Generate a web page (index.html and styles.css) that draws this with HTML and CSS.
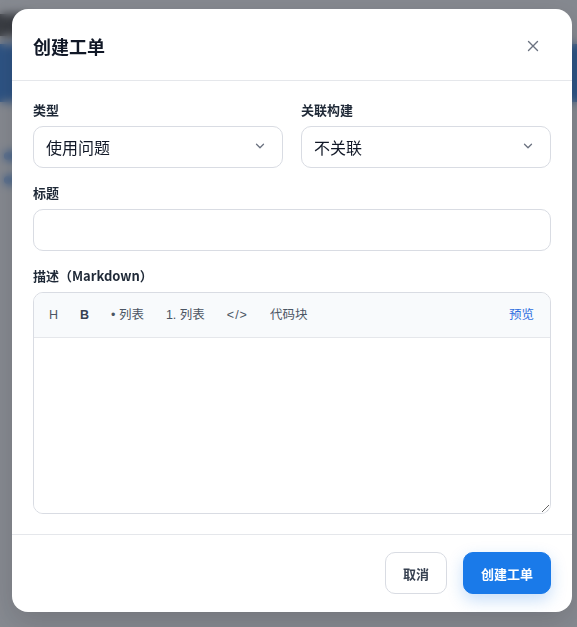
FILE: index.html
```html
<!DOCTYPE html>
<html lang="zh-CN">
<head>
<meta charset="utf-8">
<title>创建工单</title>
<link rel="stylesheet" href="styles.css">
</head>
<body>
<div class="page">
  <div class="page-top"><span class="page-logo"></span></div>
  <div class="page-band"></div>
  <div class="page-content">
    <div class="page-line"></div>
    <div class="page-line short"></div>
  </div>
</div>
<div class="overlay">
  <div class="modal">
    <div class="modal-header">
      <h2 class="modal-title">创建工单</h2>
      <button class="close-btn" aria-label="关闭">
        <svg width="12" height="12" viewBox="0 0 12 12"><path d="M1.5 1.5L10.5 10.5M10.5 1.5L1.5 10.5" stroke="#6b7280" stroke-width="1.4" stroke-linecap="round"/></svg>
      </button>
    </div>
    <div class="modal-body">
      <div class="row-2">
        <div class="field">
          <label class="label">类型</label>
          <div class="select"><span>使用问题</span>
            <svg width="10" height="6" viewBox="0 0 10 6"><path d="M1.5 1.2L5 4.7L8.5 1.2" fill="none" stroke="#6b7280" stroke-width="1.3" stroke-linecap="round" stroke-linejoin="round"/></svg>
          </div>
        </div>
        <div class="field">
          <label class="label">关联构建</label>
          <div class="select"><span>不关联</span>
            <svg width="10" height="6" viewBox="0 0 10 6"><path d="M1.5 1.2L5 4.7L8.5 1.2" fill="none" stroke="#6b7280" stroke-width="1.3" stroke-linecap="round" stroke-linejoin="round"/></svg>
          </div>
        </div>
      </div>
      <div class="field">
        <label class="label">标题</label>
        <input class="input" type="text">
      </div>
      <div class="field last">
        <label class="label">描述（Markdown）</label>
        <div class="editor">
          <div class="toolbar">
            <div class="tools">
              <button class="tool">H</button>
              <button class="tool bold">B</button>
              <button class="tool">• 列表</button>
              <button class="tool">1. 列表</button>
              <button class="tool code">&lt;/&gt;</button>
              <button class="tool">代码块</button>
            </div>
            <button class="tool preview">预览</button>
          </div>
          <textarea class="textarea"></textarea>
        </div>
      </div>
    </div>
    <div class="modal-footer">
      <button class="btn btn-cancel">取消</button>
      <button class="btn btn-primary">创建工单</button>
    </div>
  </div>
</div>
</body>
</html>
```
FILE: styles.css
```css
* { box-sizing: border-box; }
html, body { margin: 0; padding: 0; }
body {
  width: 577px;
  height: 627px;
  overflow: hidden;
  font-family: "Noto Sans CJK SC", "Noto Sans", sans-serif;
  background: #f3f4f6;
}
.page { width: 100%; height: 100%; display: flex; flex-direction: column; }
.page-top { height: 44px; background: #f1f2f4; padding: 14px 0 0 0; }
.page-logo { display: block; width: 40px; height: 22px; background: #333; border-radius: 4px; margin-left: -10px; }
.page-band { height: 58px; background: #1a6fd8; }
.page-content { flex: 1; padding: 50px 0 0 0; background: #f3f4f6; }
.page-line { height: 8px; width: 30px; background: #1a73e8; margin-bottom: 16px; margin-left: 4px; border-radius: 4px; }
.page-line.short { width: 14px; }

.overlay {
  position: fixed;
  inset: 0;
  background: rgba(62, 66, 76, 0.6);
  backdrop-filter: blur(5px);
  padding: 9px 0 0 12px;
}
.modal {
  width: 560px;
  background: #fff;
  border-radius: 16px;
  box-shadow: 0 10px 30px rgba(0,0,0,0.15);
  display: flex;
  flex-direction: column;
}
.modal-header {
  height: 72px;
  border-bottom: 1px solid #e5e7eb;
  display: flex;
  align-items: center;
  justify-content: space-between;
  padding: 2px 21px 0 21px;
}
.modal-title {
  margin: 0;
  font-size: 18px;
  font-weight: 700;
  color: #111827;
  line-height: 24px;
}
.close-btn {
  width: 32px;
  height: 32px;
  border: 0;
  background: transparent;
  display: flex;
  align-items: center;
  justify-content: center;
  margin-right: 2px;
  padding: 0;
}
.modal-body {
  padding: 19px 21px 20px 21px;
  border-bottom: 1px solid #e5e7eb;
  display: flex;
  flex-direction: column;
  gap: 15px;
}
.row-2 { display: grid; grid-template-columns: 1fr 1fr; gap: 18px; }
.field { display: flex; flex-direction: column; }
.label {
  font-size: 13px;
  font-weight: 700;
  color: #1f2937;
  line-height: 20px;
  margin-bottom: 6px;
}
.select {
  height: 42px;
  border: 1px solid #d9dce3;
  border-radius: 10px;
  display: flex;
  align-items: center;
  justify-content: space-between;
  padding: 0 17px 0 12px;
  font-size: 16px;
  color: #111827;
}
.select svg { margin-top: -3px; }
.input {
  height: 42px;
  border: 1px solid #d9dce3;
  border-radius: 10px;
  padding: 0 12px;
  font: inherit;
  outline: none;
}
.editor {
  border: 1px solid #d9dce3;
  border-radius: 10px;
  overflow: hidden;
  display: flex;
  flex-direction: column;
}
.toolbar {
  height: 45px;
  background: #f8fafc;
  border-bottom: 1px solid #e5e7eb;
  display: flex;
  align-items: center;
  justify-content: space-between;
  padding: 0 8px 0 7px;
}
.tools { display: flex; align-items: center; gap: 6px; }
.tool {
  border: 0;
  background: transparent;
  font-family: "Liberation Sans", "Noto Sans CJK SC", sans-serif;
  font-size: 12.5px;
  color: #4b5563;
  padding: 4px 8px;
  line-height: 18px;
}
.tool.bold { font-weight: 700; color: #374151; }
.tool.code { letter-spacing: 1px; }
.tool.preview { color: #2f6fe0; }
.textarea {
  display: block;
  height: 175px;
  border: 0;
  resize: vertical;
  padding: 10px 12px;
  font: inherit;
  outline: none;
}
.modal-footer {
  display: flex;
  justify-content: flex-end;
  gap: 16px;
  padding: 17px 21px 18px 21px;
}
.btn {
  height: 42px;
  border-radius: 10px;
  padding: 0 17px;
  font-family: "Noto Sans CJK SC", "Noto Sans", sans-serif;
  font-size: 13px;
  font-weight: 700;
  border: 1px solid #d9dce3;
}
.btn-cancel { background: #fff; color: #374151; width: 62px; padding: 0; }
.btn-primary {
  background: #1a7ae9;
  border-color: #1a7ae9;
  color: #fff;
  width: 88px;
  padding: 0;
  box-shadow: 0 6px 16px rgba(26, 122, 233, 0.25);
}
```
